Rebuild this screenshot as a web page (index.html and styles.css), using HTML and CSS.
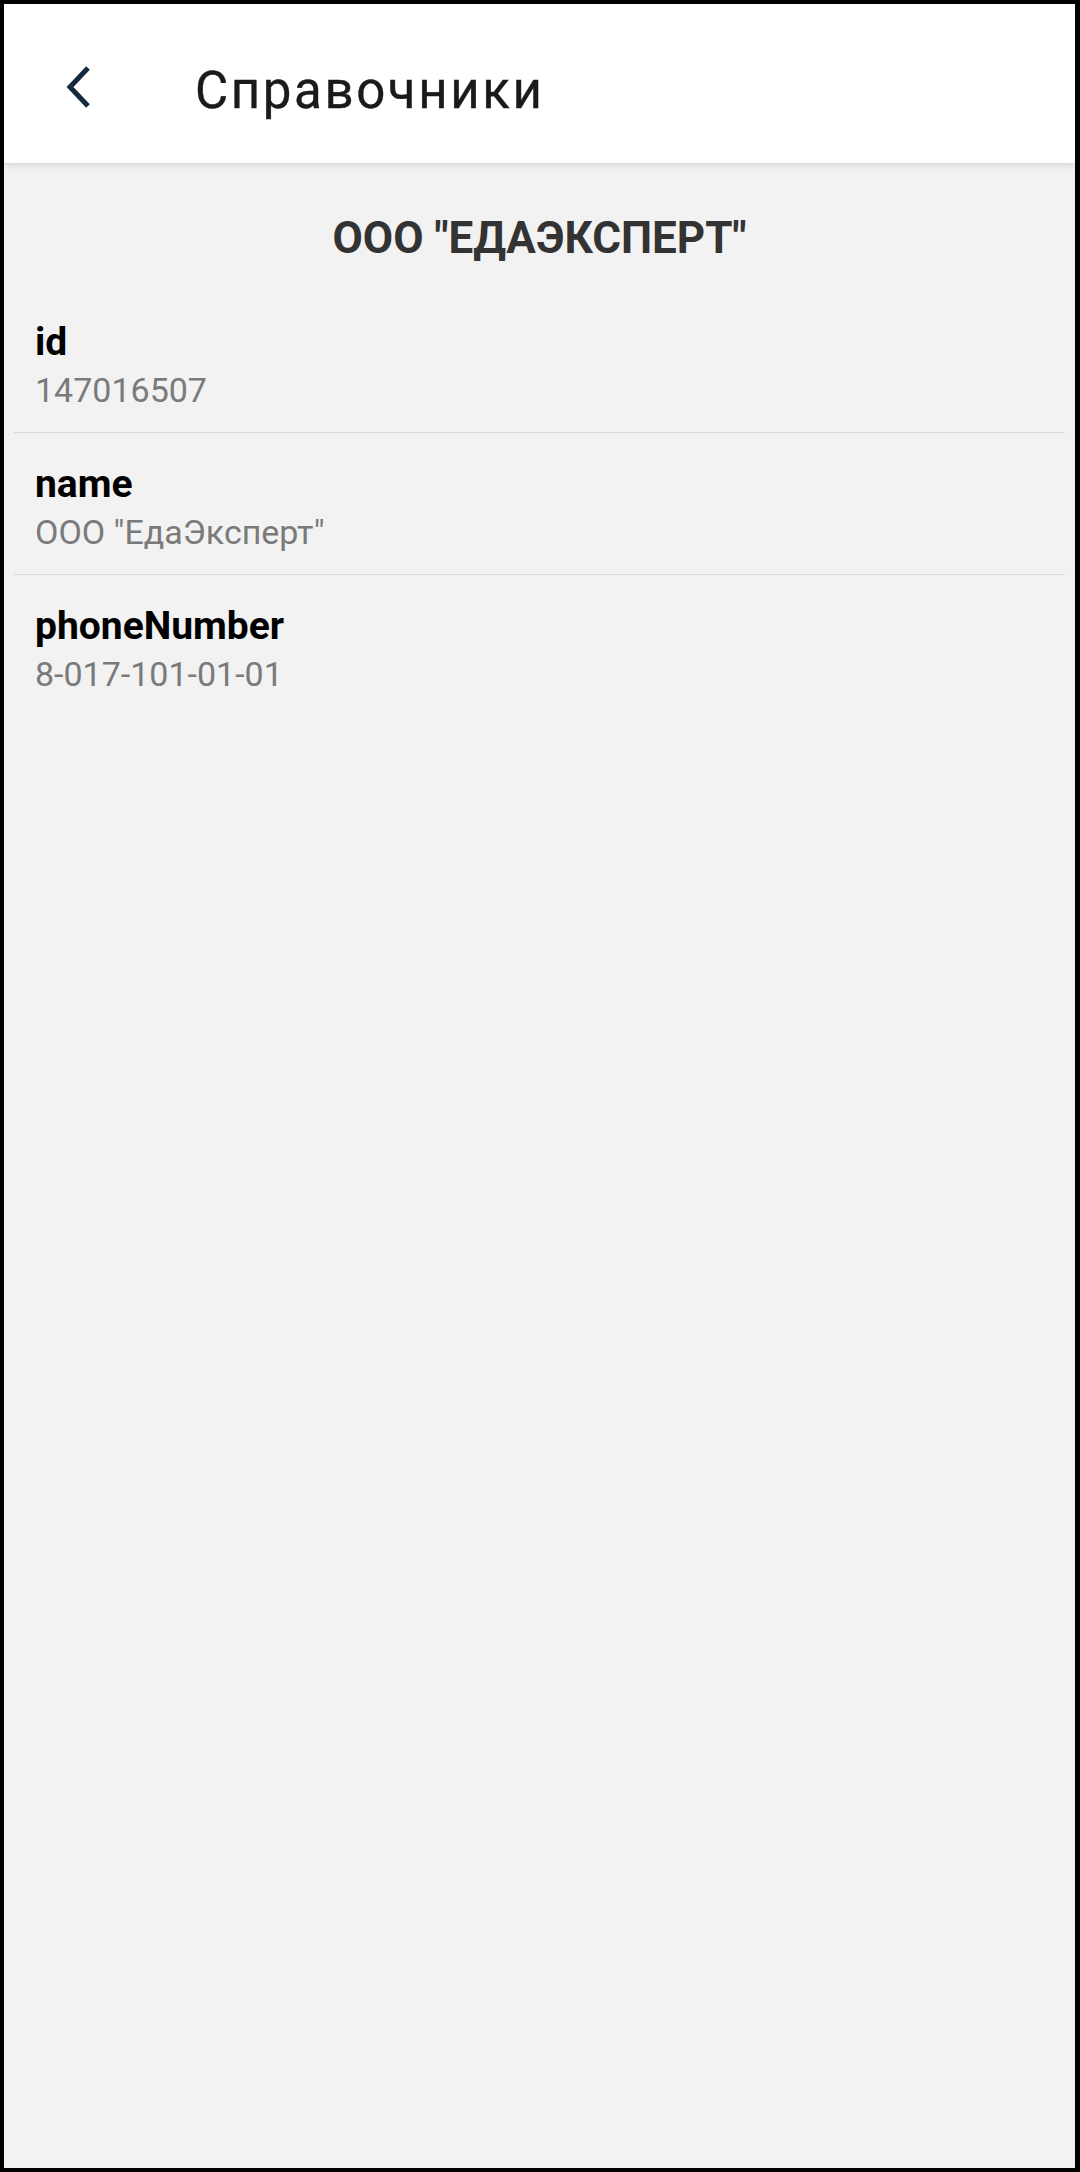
FILE: index.html
```html
<!DOCTYPE html>
<html lang="ru">
<head>
<meta charset="utf-8">
<title>Справочники</title>
<link rel="stylesheet" href="styles.css">
</head>
<body>
<div class="frame">
  <header class="appbar">
    <button class="back" aria-label="Назад">
      <svg width="26" height="42" viewBox="0 0 26 42"><path d="M23 2 L5 21 L23 40" fill="none" stroke="#15293c" stroke-width="5"/></svg>
    </button>
    <h1 class="appbar-title">Справочники</h1>
  </header>
  <main class="content">
    <h2 class="org-title">ООО "ЕДАЭКСПЕРТ"</h2>
    <ul class="fields">
      <li class="field">
        <span class="field-name">id</span>
        <span class="field-value">147016507</span>
      </li>
      <li class="field">
        <span class="field-name">name</span>
        <span class="field-value">ООО "ЕдаЭксперт"</span>
      </li>
      <li class="field">
        <span class="field-name">phoneNumber</span>
        <span class="field-value">8-017-101-01-01</span>
      </li>
    </ul>
  </main>
</div>
</body>
</html>
```
FILE: styles.css
```css
* { box-sizing: border-box; }
html, body { margin: 0; padding: 0; }
body {
  font-family: Roboto, "Noto Sans", sans-serif;
  background: #000;
}
.frame {
  width: 1080px;
  height: 2172px;
  border: 4px solid #000;
  border-right-width: 5px;
  background: #f2f2f2;
  display: flex;
  flex-direction: column;
  overflow: hidden;
}
.appbar {
  height: 159px;
  background: #fff;
  display: flex;
  align-items: center;
  box-shadow: 0 2px 6px rgba(0,0,0,0.12);
  position: relative;
  z-index: 1;
}
.back {
  border: 0;
  background: none;
  padding: 0;
  margin-left: 61px;
  margin-top: 6px;
  width: 26px;
  height: 42px;
  display: flex;
}
.appbar-title {
  margin: 14px 0 0 104px;
  font-size: 51px;
  font-weight: 400;
  letter-spacing: 2.6px;
  color: #1a1a1a;
  line-height: 60px;
  -webkit-text-stroke: 0.4px #1a1a1a;
}
.content {
  flex: 1;
  display: flex;
  flex-direction: column;
}
.org-title {
  margin: 49px 0 0;
  text-align: center;
  font-size: 44px;
  font-weight: 700;
  line-height: 52px;
  color: #333;
}
.fields {
  list-style: none;
  margin: 27px 10px 0;
  padding: 0;
}
.field {
  display: flex;
  flex-direction: column;
  gap: 5px;
  padding: 28px 21px 22px;
}
.field + .field {
  border-top: 1px solid #dadada;
}
.field-name {
  font-size: 39px;
  font-weight: 700;
  line-height: 46px;
  color: #000;
}
.field-value {
  font-size: 34px;
  line-height: 40px;
  color: #7a7a7a;
}
```
